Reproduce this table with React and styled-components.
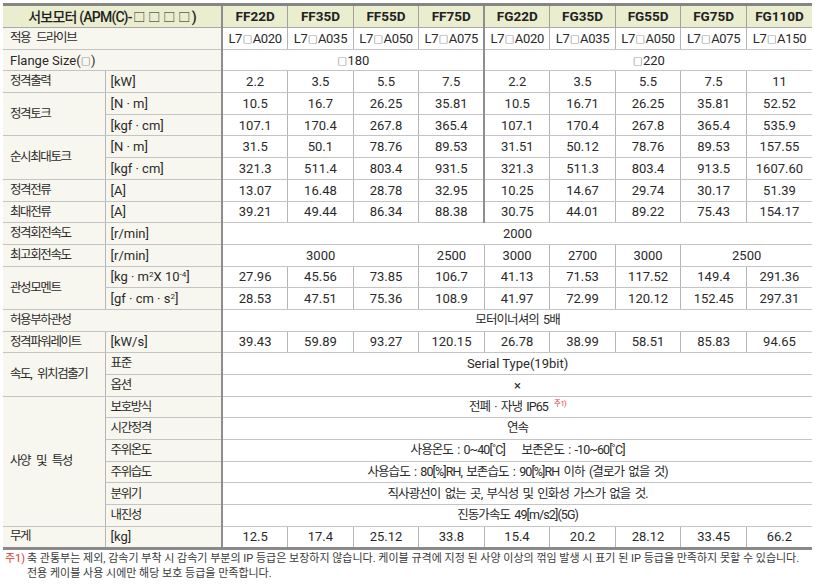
import React from "react";
import styled, { createGlobalStyle } from "styled-components";

const GlobalStyle = createGlobalStyle`
  html, body {
    margin: 0;
    padding: 0;
    background: #ffffff;
  }
  body {
    font-family: Roboto, "Noto Sans CJK KR", sans-serif;
    color: #2a2a2a;
  }
`;

const Page = styled.div`
  width: 818px;
  height: 584px;
  box-sizing: border-box;
  padding: 3px 6px 0 3px;
  overflow: hidden;
`;

const SpecTable = styled.table`
  width: 809px;
  table-layout: fixed;
  border-collapse: collapse;
  border-top: 3px solid #858585;
  border-bottom: 3px solid #8a8a8a;
`;

const Row = styled.tr`
  height: ${(p) => (p.$head ? "23px" : "21.7px")};
`;

const Cell = styled.td`
  padding: 0;
  box-sizing: border-box;
  white-space: nowrap;
  overflow: hidden;
  font-size: ${(p) => (p.$ko ? "12.5px" : "13px")};
  line-height: 1;
  text-align: center;
  vertical-align: middle;
  color: #2a2a2a;
  border-bottom: 1px solid #c4c4c4;
  border-right: ${(p) =>
    p.$last ? "none" : p.$thick ? "2px solid #8e8e8e" : "1px solid #b5b5b5"};
  letter-spacing: ${(p) => (p.$ko ? "-0.9px" : "0")};
  word-spacing: ${(p) => (p.$ko ? "2px" : "0")};
`;

const HeadCell = styled(Cell).attrs({ as: "th" })`
  background: #eaedce;
  font-weight: ${(p) => (p.$title ? 500 : 700)};
  font-size: ${(p) => (p.$title ? "14px" : "13.5px")};
  letter-spacing: ${(p) => (p.$title ? "-0.8px" : "0")};
  color: #222;
  border-bottom: 1px solid #a9a9a9;
  border-right: ${(p) =>
    p.$last ? "none" : p.$thick ? "2px solid #8e8e8e" : "1px solid #a0a0a0"};
`;

const LabelCell = styled(Cell)`
  background: #f8f7ef;
  text-align: left;
  padding-left: ${(p) => (p.$unit ? "5px" : "7px")};
  font-size: ${(p) => (p.$ko ? "12.5px" : "13px")};
  letter-spacing: ${(p) => (p.$ko ? "-1.4px" : "0")};
  word-spacing: ${(p) => (p.$ko ? "4px" : "0")};
`;

// 작은 사각형 기호 (□)
const Sq = styled.span`
  font-family: "Noto Sans CJK KR", sans-serif;
  font-size: ${(p) => (p.$big ? "12px" : "9.5px")};
  font-weight: 400;
  letter-spacing: 0;
  margin: 0 ${(p) => (p.$big ? "1.5px" : "0.5px")};
`;

const Sup = styled.sup`
  font-size: 8px;
  line-height: 0;
  vertical-align: 4px;
  letter-spacing: 0;
`;

const NoteMark = styled.sup`
  color: #e0382f;
  font-size: 7.5px;
  line-height: 0;
  vertical-align: 5px;
  margin-left: 6px;
  letter-spacing: -0.5px;
`;

const Footnote = styled.div`
  display: flex;
  margin-top: 1px;
  padding-left: 2px;
  font-size: 11px;
  line-height: 15px;
  color: #3a3a3a;
  letter-spacing: 0;
  white-space: nowrap;
`;

const FootMark = styled.span`
  flex: 0 0 22px;
  color: #e0382f;
`;

const FootText = styled.div`
  display: flex;
  flex-direction: column;
`;

const MODELS = ["FF22D", "FF35D", "FF55D", "FF75D", "FG22D", "FG35D", "FG55D", "FG75D", "FG110D"];
const DRIVES = ["A020", "A035", "A050", "A075", "A020", "A035", "A050", "A075", "A150"];

// 숫자 한 줄 (thick = FF/FG 경계 굵은 선 표시 여부)
function Values({ values, thick }) {
  return values.map((v, i) => (
    <Cell key={i} $thick={thick && i === 3} $last={i === values.length - 1}>
      {v}
    </Cell>
  ));
}

function Wide({ children, ko }) {
  return (
    <Cell colSpan={9} $last $ko={ko}>
      {children}
    </Cell>
  );
}

export default function App() {
  return (
    <Page>
      <GlobalStyle />
      <SpecTable>
        <colgroup>
          <col style={{ width: 102 }} />
          <col style={{ width: 117 }} />
          {MODELS.map((m) => (
            <col key={m} style={{ width: 65.5 }} />
          ))}
        </colgroup>
        <tbody>
          <Row $head>
            <HeadCell colSpan={2} $thick $title>
              서보모터 (APM(C)-<Sq $big>□</Sq>
              <Sq $big>□</Sq>
              <Sq $big>□</Sq>
              <Sq $big>□</Sq>)
            </HeadCell>
            {MODELS.map((m, i) => (
              <HeadCell key={m} $thick={i === 3} $last={i === 8}>
                {m}
              </HeadCell>
            ))}
          </Row>
          <Row>
            <LabelCell colSpan={2} $thick $ko>적용 드라이브</LabelCell>
            {DRIVES.map((d, i) => (
              <Cell key={i} $thick={i === 3} $last={i === 8} style={{ letterSpacing: "-0.3px" }}>
                L7<Sq>□</Sq>{d}
              </Cell>
            ))}
          </Row>
          <Row>
            <LabelCell colSpan={2} $thick>
              Flange Size(<Sq>□</Sq>)
            </LabelCell>
            <Cell colSpan={4} $thick>
              <Sq>□</Sq>180
            </Cell>
            <Cell colSpan={5} $last>
              <Sq>□</Sq>220
            </Cell>
          </Row>
          <Row>
            <LabelCell $ko>정격출력</LabelCell>
            <LabelCell $unit $thick>[kW]</LabelCell>
            <Values thick values={["2.2", "3.5", "5.5", "7.5", "2.2", "3.5", "5.5", "7.5", "11"]} />
          </Row>
          <Row>
            <LabelCell rowSpan={2} $ko>정격토크</LabelCell>
            <LabelCell $unit $thick>[N · m]</LabelCell>
            <Values thick values={["10.5", "16.7", "26.25", "35.81", "10.5", "16.71", "26.25", "35.81", "52.52"]} />
          </Row>
          <Row>
            <LabelCell $unit $thick>[kgf · cm]</LabelCell>
            <Values thick values={["107.1", "170.4", "267.8", "365.4", "107.1", "170.4", "267.8", "365.4", "535.9"]} />
          </Row>
          <Row>
            <LabelCell rowSpan={2} $ko>순시최대토크</LabelCell>
            <LabelCell $unit $thick>[N · m]</LabelCell>
            <Values thick values={["31.5", "50.1", "78.76", "89.53", "31.51", "50.12", "78.76", "89.53", "157.55"]} />
          </Row>
          <Row>
            <LabelCell $unit $thick>[kgf · cm]</LabelCell>
            <Values thick values={["321.3", "511.4", "803.4", "931.5", "321.3", "511.3", "803.4", "913.5", "1607.60"]} />
          </Row>
          <Row>
            <LabelCell $ko>정격전류</LabelCell>
            <LabelCell $unit $thick>[A]</LabelCell>
            <Values thick values={["13.07", "16.48", "28.78", "32.95", "10.25", "14.67", "29.74", "30.17", "51.39"]} />
          </Row>
          <Row>
            <LabelCell $ko>최대전류</LabelCell>
            <LabelCell $unit $thick>[A]</LabelCell>
            <Values thick values={["39.21", "49.44", "86.34", "88.38", "30.75", "44.01", "89.22", "75.43", "154.17"]} />
          </Row>
          <Row>
            <LabelCell $ko>정격회전속도</LabelCell>
            <LabelCell $unit $thick>[r/min]</LabelCell>
            <Wide>2000</Wide>
          </Row>
          <Row>
            <LabelCell $ko>최고회전속도</LabelCell>
            <LabelCell $unit $thick>[r/min]</LabelCell>
            <Cell colSpan={3}>3000</Cell>
            <Cell>2500</Cell>
            <Cell>3000</Cell>
            <Cell>2700</Cell>
            <Cell>3000</Cell>
            <Cell colSpan={2} $last>2500</Cell>
          </Row>
          <Row>
            <LabelCell rowSpan={2} $ko>관성모멘트</LabelCell>
            <LabelCell $unit $thick>
              [kg · m<Sup>2</Sup>X 10<Sup>-4</Sup>]
            </LabelCell>
            <Values values={["27.96", "45.56", "73.85", "106.7", "41.13", "71.53", "117.52", "149.4", "291.36"]} />
          </Row>
          <Row>
            <LabelCell $unit $thick>
              [gf · cm · s<Sup>2</Sup>]
            </LabelCell>
            <Values values={["28.53", "47.51", "75.36", "108.9", "41.97", "72.99", "120.12", "152.45", "297.31"]} />
          </Row>
          <Row>
            <LabelCell colSpan={2} $thick $ko>허용부하관성</LabelCell>
            <Wide ko>모터이너셔의 5배</Wide>
          </Row>
          <Row>
            <LabelCell $ko>정격파워레이트</LabelCell>
            <LabelCell $unit $thick>[kW/s]</LabelCell>
            <Values values={["39.43", "59.89", "93.27", "120.15", "26.78", "38.99", "58.51", "85.83", "94.65"]} />
          </Row>
          <Row>
            <LabelCell rowSpan={2} $ko>속도, 위치검출기</LabelCell>
            <LabelCell $unit $thick $ko>표준</LabelCell>
            <Wide>Serial Type(19bit)</Wide>
          </Row>
          <Row>
            <LabelCell $unit $thick $ko>옵션</LabelCell>
            <Wide>×</Wide>
          </Row>
          <Row>
            <LabelCell rowSpan={6} $ko>사양 및 특성</LabelCell>
            <LabelCell $unit $thick $ko>보호방식</LabelCell>
            <Wide ko>
              전폐 · 자냉 IP65<NoteMark>주1)</NoteMark>
            </Wide>
          </Row>
          <Row>
            <LabelCell $unit $thick $ko>시간정격</LabelCell>
            <Wide ko>연속</Wide>
          </Row>
          <Row>
            <LabelCell $unit $thick $ko>주위온도</LabelCell>
            <Wide ko>사용온도 : 0~40[˚C]&nbsp;&nbsp;&nbsp;&nbsp;보존온도 : -10~60[˚C]</Wide>
          </Row>
          <Row>
            <LabelCell $unit $thick $ko>주위습도</LabelCell>
            <Wide ko>사용습도 : 80[%]RH, 보존습도 : 90[%]RH 이하 (결로가 없을 것)</Wide>
          </Row>
          <Row>
            <LabelCell $unit $thick $ko>분위기</LabelCell>
            <Wide ko>직사광선이 없는 곳, 부식성 및 인화성 가스가 없을 것.</Wide>
          </Row>
          <Row>
            <LabelCell $unit $thick $ko>내진성</LabelCell>
            <Wide ko>진동가속도 49[m/s2](5G)</Wide>
          </Row>
          <Row>
            <LabelCell $ko>무게</LabelCell>
            <LabelCell $unit $thick>[kg]</LabelCell>
            <Values values={["12.5", "17.4", "25.12", "33.8", "15.4", "20.2", "28.12", "33.45", "66.2"]} />
          </Row>
        </tbody>
      </SpecTable>
      <Footnote>
        <FootMark>주1)</FootMark>
        <FootText>
          <span>
            축 관통부는 제외, 감속기 부착 시 감속기 부분의 IP 등급은 보장하지 않습니다. 케이블 규격에 지정 된 사양 이상의 꺾임 발생 시 표기 된 IP 등급을 만족하지 못할 수 있습니다.
          </span>
          <span>전용 케이블 사용 시에만 해당 보호 등급을 만족합니다.</span>
        </FootText>
      </Footnote>
    </Page>
  );
}
